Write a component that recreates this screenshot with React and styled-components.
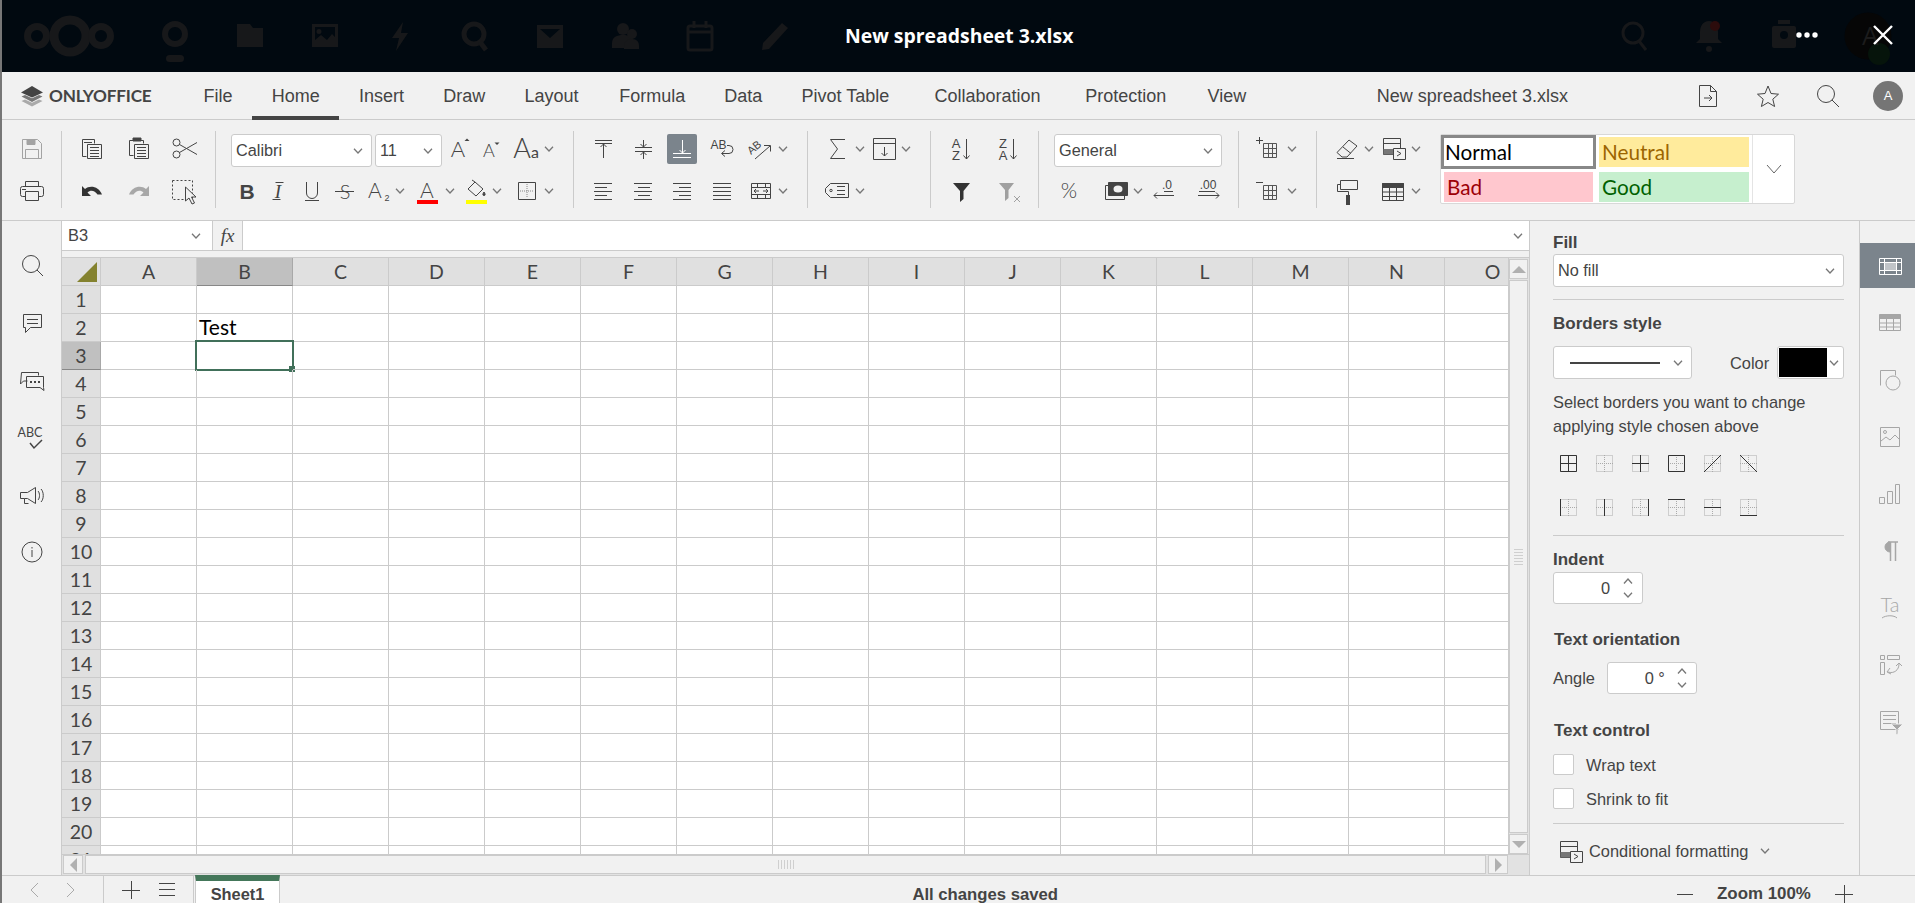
import React from "react";
import styled, { createGlobalStyle } from "styled-components";

const GlobalStyle = createGlobalStyle`
  html, body { margin: 0; padding: 0; overflow: hidden; background: #f1f1f1; }
  * { box-sizing: border-box; }
`;

const INK = "#444444";
const LINE = "#cbcbcb";
const UI_FONT = `"Liberation Sans", Arial, sans-serif`;

const Page = styled.div`
  width: 1915px;
  height: 903px;
  border-left: 2px solid #777;
  display: flex;
  flex-direction: column;
  overflow: hidden;
  background: #f1f1f1;
  color: ${INK};
  font-family: ${UI_FONT};
  font-size: 16.4px;
`;

/* ---------- dimmed nextcloud header ---------- */
const TopBar = styled.header`
  position: relative;
  flex: 0 0 72px;
  display: flex;
  align-items: center;
  justify-content: space-between;
  background: #010910;
  padding: 0 21px 0 22px;
`;
const TopGroup = styled.div`
  display: flex;
  align-items: center;
  gap: 45px;
`;
const TopTitle = styled.div`
  position: absolute;
  left: 843px;
  top: 20px;
  color: #fff;
  font: 700 19.400px/32px "Open Sans", sans-serif;
  white-space: nowrap;
`;
const OverButton = styled.div`
  position: absolute;
  top: 20px;
  left: ${(p) => p.$left}px;
  line-height: 0;
`;

const Dim = ({ w = 30, h = 30, children }) => (
  <svg width={w} height={h} viewBox={`0 0 ${w} ${h}`} fill="#17181a">{children}</svg>
);

const NextLogo = () => (
  <svg width="91" height="42" viewBox="0 0 91 42" fill="none" stroke="#17181a">
    <circle cx="46" cy="21" r="16" strokeWidth="9" />
    <circle cx="13" cy="21" r="9.5" strokeWidth="7" />
    <circle cx="77" cy="21" r="9.5" strokeWidth="7" />
  </svg>
);

const TopIcons = [
  <svg key="bulb" width="30" height="42" viewBox="0 0 30 42" fill="none" stroke="#17181a" style={{ marginTop: 12 }}>
    <circle cx="15" cy="13" r="10" strokeWidth="6" />
    <rect x="6" y="34" width="18" height="7" rx="3.5" fill="#17181a" stroke="none" />
  </svg>,
  <Dim key="folder"><path d="M2 3h13l3 4h10v19H2z" /></Dim>,
  <Dim key="image"><path fillRule="evenodd" d="M2 3h26v23H2zM5 6v13l6-5 6 5 5-6 3 3V6zM9 8a2.5 2.5 0 1 1 0 5 2.5 2.5 0 0 1 0-5z" /></Dim>,
  <Dim key="bolt"><path d="M18 1L7 17h7l-3 13 12-18h-7z" /></Dim>,
  <svg key="search" width="30" height="32" viewBox="0 0 30 32" fill="none" stroke="#17181a" strokeWidth="5"><circle cx="14" cy="14" r="10" /><path d="M20 22l6 8" /></svg>,
  <Dim key="mail"><path fillRule="evenodd" d="M2 4h26v23H2zM5 8l10 9 10-9z" /></Dim>,
  <Dim key="contacts"><circle cx="13" cy="8" r="6" /><path d="M2 22c0-6 5-8 11-8s11 2 11 8v5H2z" /><circle cx="22" cy="13" r="5" /><path d="M14 26c0-5 3-8 8-8s7 3 7 7v3H14z" /></Dim>,
  <svg key="calendar" width="30" height="32" viewBox="0 0 30 32" fill="none" stroke="#17181a" strokeWidth="3"><rect x="3" y="6" width="24" height="24" rx="2" /><path d="M2 12h26M9 1v7M21 1v7" /></svg>,
  <Dim key="pencil"><path d="M22 2l6 5L9 28l-7 1 1-7z" /></Dim>,
];

/* ---------- tab row ---------- */
const TabBar = styled.nav`
  flex: 0 0 48px;
  display: flex;
  align-items: stretch;
  border-bottom: 1px solid ${LINE};
  font-size: 18px;
  padding-left: 18px;
`;
const Logo = styled.div`
  display: flex;
  align-items: center;
  gap: 5px;
  width: 164px;
  font: 700 17.2px "Lato", sans-serif;
  color: #444;
  letter-spacing: -0.2px;
`;
const Tab = styled.div`
  position: relative;
  padding: 4px 19.6px 0;
  display: flex;
  align-items: center;
  color: ${INK};
  border-bottom: ${(p) => (p.$active ? `4px solid ${INK}` : "4px solid transparent")};
  margin: 0 ${(p) => p.$extra || 0}px -1px 0;
  white-space: nowrap;
`;
const DocName = styled.div`
  margin-left: 111px;
  padding-top: 1px;
  display: flex;
  align-items: center;
  white-space: nowrap;
`;
const TabIcons = styled.div`
  margin-left: auto;
  display: flex;
  align-items: center;
  gap: 30px;
  padding-right: 12px;
`;
const Avatar = styled.div`
  width: 30px;
  height: 30px;
  border-radius: 50%;
  background: #757575;
  color: #fff;
  font-size: 13px;
  display: flex;
  align-items: center;
  justify-content: center;
`;

/* ---------- toolbar ---------- */
const Toolbar = styled.section`
  flex: 0 0 101px;
  display: flex;
  align-items: stretch;
  padding: 11px 0 12px;
  border-bottom: 1px solid ${LINE};
`;
const Group = styled.div`
  flex: 0 0 ${(p) => p.$w}px;
  display: flex;
  flex-direction: column;
  gap: 8px;
  padding: 1px 0 0 ${(p) => p.$pad || 0}px;
  border-right: ${(p) => (p.$last ? "none" : `1px solid ${LINE}`)};
`;
const ToolRow = styled.div`
  display: flex;
  align-items: center;
  height: 34px;
  gap: ${(p) => p.$gap || 0}px;
`;
const Tool = styled.div`
  flex: 0 0 ${(p) => p.$w || 30}px;
  height: ${(p) => (p.$active ? "30px" : "34px")};
  margin-left: ${(p) => p.$ml || 0}px;
  display: flex;
  align-items: center;
  justify-content: center;
  background: ${(p) => (p.$active ? "#7b848c" : "transparent")};
  border-radius: 2px;
`;
const Combo = styled.div`
  flex: 0 0 ${(p) => p.$w}px;
  height: 33px;
  align-self: flex-start;
  margin-left: ${(p) => p.$ml || 0}px;
  margin-top: ${(p) => p.$mt || 0}px;
  background: #fff;
  border: 1px solid ${LINE};
  border-radius: 3px;
  display: flex;
  align-items: center;
  justify-content: space-between;
  padding: 0 ${(p) => p.$pr || 8}px 0 ${(p) => p.$pl || 4}px;
  color: ${INK};
  font-size: 16.3px;
`;

const Chev = ({ up, color = "#777" }) => (
  <svg width="10" height="6" viewBox="0 0 10 6" fill="none" stroke={color} strokeWidth="1.3">
    <path d={up ? "M1 5.5l4-4.5 4 4.5" : "M1 .8l4 4.2 4-4.2"} />
  </svg>
);
const ChevTool = ({ ml }) => (
  <Tool $w={14} $ml={ml}><Chev /></Tool>
);

const Ic = ({ w = 30, h = 30, color = INK, children }) => (
  <svg width={w} height={h} viewBox={`0 0 ${w} ${h}`} fill="none" stroke={color} strokeWidth="1" style={{ display: "block", flex: "none" }}>
    {children}
  </svg>
);
const T = ({ x, y, s, w = 400, f = "Liberation Sans", c = INK, i, r, children }) => (
  <text x={x} y={y} fontSize={s} fontWeight={w} fontFamily={f} fill={c} stroke="none" textAnchor="middle" fontStyle={i ? "italic" : "normal"} transform={r}>
    {children}
  </text>
);
const Lines = ({ x1, x2, ys }) => (
  <path d={ys.map((y) => `M${x1} ${y}H${x2}`).join("")} />
);

const SaveI = () => (
  <Ic color="#a3a3a3"><path d="M5.5 5.5h15l4 4v15h-19z" /><path d="M10 5.5h8v5h-8z" fill="#a3a3a3" /><path d="M8.5 24.5v-9h13v9" /></Ic>
);
const PrintI = () => (
  <Ic><path d="M8.5 10V5.5h13V10M8.5 20.5h-3a2 2 0 0 1-2-2v-6a2 2 0 0 1 2-2h19a2 2 0 0 1 2 2v6a2 2 0 0 1-2 2h-3" /><path d="M8.5 15.5h13v9h-13z" /><path d="M5 13.5h4" /></Ic>
);
const CopyI = () => (
  <Ic><path d="M9.5 22.5h-4v-17h12v4" /><path d="M10.5 10.5h14v14h-14z" fill="#f1f1f1" /><Lines x1={13} x2={22} ys={[13.5, 16.5, 19.5, 22.5]} /><Lines x1={7} x2={15} ys={[8.5]} /></Ic>
);
const PasteI = () => (
  <Ic><path d="M9.5 21.5h-4v-15h14v3" /><path d="M9 4h8v3H9z" fill={INK} /><path d="M10.5 10.5h14v14h-14z" fill="#f1f1f1" /><Lines x1={13} x2={22} ys={[13.5, 16.5, 19.5, 22.5]} /></Ic>
);
const CutI = () => (
  <Ic><circle cx="6.5" cy="8.5" r="3.5" /><circle cx="6.5" cy="20.5" r="3.5" /><path d="M9.5 10.5L27 20.5M9.5 18.5L27 8.5" /></Ic>
);
const UndoI = ({ color = "#333" }) => (
  <Ic><path fill={color} stroke="none" d="M5 10v10h9l-3.5-3.5c3-3 7.5-2 10 2h4.500C22 10.500 13 8.500 8 13z" /></Ic>
);
const RedoI = () => (
  <Ic><path fill="#a8a8a8" stroke="none" d="M25 10v10h-9l3.500-3.500c-3-3-7.500-2-10 2H5c3-8 12-10 17-5.500z" /></Ic>
);
const SelectAllI = () => (
  <Ic><path d="M2.500 4.500h20v19h-20z" strokeDasharray="2 2" /><path d="M15.500 11v14l3.500-3 3 6 2.500-1-3-6h4.500z" fill="#f1f1f1" /></Ic>
);
const GrowI = () => (
  <Ic><T x={14} y={23} s={22} f="Lato" w={300}>A</T><path d="M20.500 7l2.500-2.500L25.500 7z" fill={INK} stroke="none" /></Ic>
);
const ShrinkI = () => (
  <Ic><T x={14} y={23} s={18} f="Lato" w={300}>A</T><path d="M19.500 8.500h5L22 11z" fill={INK} stroke="none" /></Ic>
);
const CaseI = () => (
  <Ic><T x={11} y={24} s={27} f="Lato" w={300}>A</T><T x={24} y={24} s={16} f="Lato">a</T></Ic>
);
const BoldI = () => <Ic><T x={15} y={23} s={21} w={700}>B</T></Ic>;
const ItalicI = () => <Ic><T x={15} y={22} s={19} f="Liberation Serif" i>I</T><path d="M9.500 23.500h8M12.500 6.500h8" /></Ic>;
const UnderI = () => <Ic><path d="M9.500 6v11a5.500 5.500 0 0 0 11 0V6M8 24.500h14" /></Ic>;
const StrikeI = () => <Ic><T x={15} y={23} s={20} f="Lato" w={300}>S</T><path d="M5 15.500h19" /></Ic>;
const SubI = () => <Ic><T x={12} y={22} s={21} f="Lato" w={300}>A</T><T x={24} y={25} s={9}>2</T></Ic>;
const ColorI = () => (
  <Ic><T x={15} y={22} s={21} f="Lato" w={300}>A</T><path d="M5 24h21v4H5z" fill="#ff0000" stroke="none" /></Ic>
);
const FillI = () => (
  <Ic><path d="M14 6l8 7-7 7-8-7z" /><path d="M14 6l-3-2" /><path d="M23 16c-1.500 2-1.500 3.500 0 3.500s1.500-1.500 0-3.500z" fill={INK} /><path d="M5 24h21v4H5z" fill="#ffff00" stroke="none" /></Ic>
);
const BordersI = () => (
  <Ic><path d="M6.500 6.500h17v17h-17z" /><path d="M15 8v14M8 15h14" stroke="#888" strokeDasharray="1 1" /></Ic>
);

const AlignV = ({ kind, color = INK }) => (
  <Ic color={color}>
    {kind === "top" && <><Lines x1={7} x2={24} ys={[6.500, 9.500]} /><path d="M15.500 24V10M12.500 13l3-3 3 3" /></>}
    {kind === "mid" && <><Lines x1={7} x2={24} ys={[13.500, 17.500]} /><path d="M15.500 6v7M12.500 10l3 3 3-3M15.500 25v-7M12.500 21l3-3 3 3" /></>}
    {kind === "bot" && <><Lines x1={6} x2={24} ys={[19.500, 23.500]} /><path d="M15.500 6v13M12.500 16l3 3 3-3" /></>}
  </Ic>
);
const WrapI = () => (
  <Ic><T x={11.500} y={15} s={12}>AB</T><path d="M20 11.500h2a3.500 3.500 0 0 1 0 8h-7M18 16.500l-3.500 3 3.500 3" /></Ic>
);
const OrientI = () => (
  <Ic><T x={9} y={16} s={11} r="rotate(-40 10 14)">AB</T><path d="M9 25L24 12M18 11.500h6.500v6" /></Ic>
);
const AlignH = ({ kind }) => {
  const short = kind === "left" ? [7, 19] : kind === "center" ? [10, 22] : kind === "right" ? [12, 24] : [6, 24];
  return (
    <Ic>
      <Lines x1={6} x2={24} ys={[7.500, 15.500, 23.500]} />
      <Lines x1={short[0]} x2={short[1]} ys={[11.500, 19.500]} />
    </Ic>
  );
};
const MergeI = () => (
  <Ic><path d="M5.500 7.500h19v15h-19z" /><path d="M5.500 11.500h19M5.500 18.500h19M11.500 7.500v4M19.500 7.500v4M11.500 18.500v4M19.500 18.500v4M8 15h5M17 15h5M10 13l-2 2 2 2M20 13l2 2-2 2" /></Ic>
);
const SumI = () => <Ic><path d="M23 5.500H8.500L15.500 15l-7 9.500H23" /></Ic>;
const FillDownI = () => (
  <Ic><path d="M4.500 4.500h22v21h-22zM4.500 9.500h22" /><path d="M15.500 13v9M12.500 19l3 3 3-3" /></Ic>
);
const TagI = () => (
  <Ic><path d="M8.500 7.500h18v14h-18l-5-5v-4z" /><circle cx="9" cy="14.500" r="1.200" /><Lines x1={15} x2={23} ys={[10.500, 14.500, 18.500]} /></Ic>
);
const SortI = ({ a, b }) => (
  <Ic><T x={9} y={14} s={13}>{a}</T><T x={9} y={26} s={13}>{b}</T><path d="M19.500 5v20M16.500 21.500l3 3.500 3-3.500" /></Ic>
);
const FunnelI = ({ color = "#333" }) => (
  <Ic><path d="M6 7h17l-6.500 8v8L13 26V15z" fill={color} stroke="none" /></Ic>
);
const ClearFilterI = () => (
  <Ic color="#a0a0a0"><path d="M5 7h15l-5.500 7v8L11 25V14z" fill="#a0a0a0" stroke="none" /><path d="M20 20l6 6M26 20l-6 6" /></Ic>
);
const PercentI = () => <Ic><T x={15} y={22} s={21} f="Lato" w={300}>%</T></Ic>;
const MoneyI = () => (
  <Ic><path d="M8.500 6.500h19v13h-19z" fill={INK} /><ellipse cx="18" cy="13" rx="4.500" ry="3.500" fill="#f1f1f1" stroke="none" /><path d="M8.500 9.500h-3v14h19v-4" /></Ic>
);
const DecI = () => (
  <Ic><T x={20} y={13} s={12}>.0</T><path d="M27 19.500H7M10 16.500l-3 3 3 3" /><path d="M17 15.500h9" /></Ic>
);
const IncI = () => (
  <Ic><T x={15} y={13} s={12}>.00</T><path d="M5 19.500h21M23 16.500l3 3-3 3M6 15.500h16" /></Ic>
);
const CellsI = ({ sign }) => (
  <Ic>
    <path d="M10.500 9.500h13v14h-13zM10.500 14.500h13M10.500 19.500h13M15.500 9.500v14M19.500 9.500v14" stroke="#555" />
    <path d={sign === "+" ? "M3 6.500h7M6.500 3v7" : "M3 6.500h7"} />
  </Ic>
);
const EraserI = () => (
  <Ic><path d="M5 18.500L17 6l8 6-10 11H10z" /><path d="M11 13l8 6.500" /><path d="M5 24.500h17" /></Ic>
);
const CondI = ({ size = 30 }) => (
  <Ic w={size} h={size}>
    <path d="M5.500 4.500h17v16h-17z" /><path d="M5.500 9.500h17" />
    <path d="M5.500 15h10v5.500h-10z" fill="#777" stroke="none" />
    <path d="M15.500 14.500h12v11h-12z" fill="#f1f1f1" /><path d="M19 17l4 2.500-4 2.500" />
  </Ic>
);
const RollerI = () => (
  <Ic><path d="M8.500 4.500h17v9h-17zM8.500 8.500h-3v7h11v4" /><path d="M14 19h4v10h-4z" fill={INK} stroke="none" /></Ic>
);
const TableI = () => (
  <Ic><path d="M4.500 7.500h21v17h-21z" /><path d="M4.500 7.500h21v4h-21z" fill={INK} /><path d="M4.500 16h21M4.500 20.500h21M11.500 11.500v13M18.500 11.500v13" /></Ic>
);

/* ---------- style gallery ---------- */
const Gallery = styled.div`
  flex: 0 0 355px;
  height: 70px;
  margin: 3px 0 0 16px;
  display: grid;
  grid-template-columns: 155px 156px 1fr;
  grid-template-rows: 34px 34px;
  background: #fff;
  border: 1px solid #d8d8d8;
  border-radius: 2px;
`;
const StyleCell = styled.div`
  margin: ${(p) => (p.$selected ? "0" : p.$low ? "3px 3px 1px" : "2px 3px")};
  border: ${(p) => (p.$selected ? "3px solid #888" : "none")};
  background: ${(p) => p.$bg};
  color: ${(p) => p.$fg};
  font: 20.7px/1 "Lato", sans-serif;
  display: flex;
  align-items: center;
  padding-left: ${(p) => (p.$selected ? "1px" : "3px")};
`;
const GalleryMore = styled.div`
  grid-column: 3;
  grid-row: 1 / span 2;
  border-left: 1px solid #e4e4e4;
  display: flex;
  align-items: center;
  justify-content: center;
`;

/* ---------- main ---------- */
const Main = styled.div`
  flex: 0 0 654px;
  min-height: 0;
  display: flex;
  align-items: stretch;
`;
const LeftRail = styled.aside`
  flex: 0 0 60px;
  border-right: 1px solid ${LINE};
  display: flex;
  flex-direction: column;
  align-items: center;
  gap: 27.200px;
  padding-top: 30px;
`;
const Center = styled.div`
  flex: 0 0 1468px;
  min-height: 0;
  border-right: 1px solid ${LINE};
  display: flex;
  flex-direction: column;
`;
const FormulaBar = styled.div`
  flex: 0 0 30px;
  display: flex;
  border-bottom: 1px solid ${LINE};
`;
const NameBox = styled.div`
  flex: 0 0 150px;
  background: #fff;
  display: flex;
  align-items: center;
  justify-content: space-between;
  padding: 0 11px 0 6px;
`;
const FxBox = styled.div`
  flex: 0 0 31px;
  background: #f1f1f1;
  border-left: 1px solid ${LINE};
  border-right: 1px solid ${LINE};
  font: italic 19px "Liberation Serif", serif;
  display: flex;
  align-items: center;
  justify-content: center;
  color: #444;
`;
const FormulaInput = styled.div`
  flex: 1;
  background: #fff;
  display: flex;
  align-items: center;
  justify-content: flex-end;
  padding-right: 6px;
`;
const FormulaGap = styled.div`
  flex: 0 0 7px;
  border-bottom: 1px solid ${LINE};
`;
const SheetRow = styled.div`
  flex: 0 0 596px;
  min-height: 0;
  display: flex;
`;
const SheetClip = styled.div`
  flex: 0 0 1446px;
  overflow: hidden;
  background: #fff;
`;
const Cells = styled.div`
  display: grid;
  grid-template-columns: 39px repeat(15, 96px);
  grid-auto-rows: 28px;
  width: max-content;
  font: 19.500px "Lato", sans-serif;
`;
const Head = styled.div`
  background: ${(p) => (p.$sel ? "#c0c0c0" : "#e0e0e0")};
  border-right: 1px solid ${(p) => (p.$sel ? "#a8a8a8" : LINE)};
  border-bottom: 1px solid ${(p) => (p.$sel ? "#888" : LINE)};
  color: #444;
  display: flex;
  align-items: center;
  justify-content: center;
`;
const Corner = styled.div`
  background: #e0e0e0;
  border-right: 1px solid ${LINE};
  border-bottom: 1px solid ${LINE};
  display: flex;
  align-items: flex-end;
  justify-content: flex-end;
  padding: 0 3px 3px 0;
  &::after {
    content: "";
    width: 20px;
    height: 20px;
    background: #84822f;
    clip-path: polygon(100% 0, 100% 100%, 0 100%);
  }
`;
const Cell = styled.div`
  position: relative;
  border-right: 1px solid ${LINE};
  border-bottom: 1px solid ${LINE};
  color: #000;
  padding-left: 2px;
  font-size: 21px;
  line-height: 25px;
`;
const Selection = styled.div`
  position: absolute;
  left: -2px;
  top: -2px;
  width: 99px;
  height: 31px;
  border: 2px solid #41705a;
  &::after {
    content: "";
    position: absolute;
    right: -3px;
    bottom: -3px;
    width: 6px;
    height: 6px;
    background: #41705a;
  }
`;
const VScroll = styled.div`
  flex: 0 0 21px;
  display: flex;
  flex-direction: column;
  gap: 1px;
  background: #e2e2e2;
  padding-top: 1px;
  border-left: 1px solid ${LINE};
  padding-right: 1px;
`;
const ScrollBtn = styled.div`
  flex: 0 0 20px;
  background: #f1f1f1;
  border: 1px solid ${LINE};
  display: flex;
  align-items: center;
  justify-content: center;
`;
const ScrollThumb = styled.div`
  flex: 1;
  background: #f1f1f1;
  border: 1px solid ${LINE};
  display: flex;
  flex-direction: ${(p) => (p.$h ? "row" : "column")};
  align-items: center;
  justify-content: center;
  gap: 2px;
`;
const Grip = styled.span`
  background: #cfcfcf;
  width: ${(p) => (p.$h ? "1px" : "9px")};
  height: ${(p) => (p.$h ? "9px" : "1px")};
`;
const HScroll = styled.div`
  flex: 1;
  min-height: 0;
  display: flex;
  gap: 2px;
  background: #e2e2e2;
  padding: 0 21px 1px 1px;
  border-top: 1px solid ${LINE};
`;
const Tri = styled.span`
  width: 0;
  height: 0;
  border: 5px solid transparent;
  ${(p) => p.$dir === "up" && `border-bottom: 7px solid #b0b0b0; border-top: 0; border-left-width: 7px; border-right-width: 7px;`}
  ${(p) => p.$dir === "down" && `border-top: 7px solid #b0b0b0; border-bottom: 0; border-left-width: 7px; border-right-width: 7px;`}
  ${(p) => p.$dir === "left" && `border-right: 7px solid #b0b0b0; border-left: 0; border-top-width: 7px; border-bottom-width: 7px;`}
  ${(p) => p.$dir === "right" && `border-left: 7px solid #b0b0b0; border-right: 0; border-top-width: 7px; border-bottom-width: 7px;`}
`;

/* ---------- settings panel ---------- */
const Panel = styled.aside`
  flex: 0 0 330px;
  border-right: 1px solid ${LINE};
  padding: 11px 15px 0 23px;
`;
const Label = styled.div`
  font-weight: 700;
  font-size: 17px;
  height: 20px;
  line-height: 22px;
  margin-top: ${(p) => p.$mt || 0}px;
  margin-left: ${(p) => p.$ml || 0}px;
`;
const Divider = styled.div`
  height: 1px;
  background: ${LINE};
  margin-top: ${(p) => p.$mt}px;
`;
const PanelRow = styled.div`
  display: flex;
  align-items: center;
  margin-top: ${(p) => p.$mt || 0}px;
`;
const ColorLabel = styled.span`
  margin: 2px 0 0 38px;
`;
const LineSample = styled.span`
  width: 90px;
  height: 2px;
  background: #444;
  margin-left: 12px;
`;
const Swatch = styled.div`
  flex: 0 0 67px;
  height: 33px;
  margin-left: auto;
  background: #fff;
  border: 1px solid ${LINE};
  border-radius: 3px;
  padding: 1px;
  display: flex;
  align-items: center;
  gap: 2px;
  &::before {
    content: "";
    width: 48px;
    height: 29px;
    background: #000;
  }
`;
const Hint = styled.p`
  margin: 12px 0 0;
  line-height: 23.500px;
`;
const BorderGrid = styled.div`
  display: grid;
  grid-template-columns: repeat(6, 36px);
  grid-auto-rows: 17px;
  row-gap: 27px;
  margin: 17px 0 0 7px;
`;
const Stepper = styled.div`
  flex: 0 0 90px;
  height: 32px;
  background: #fff;
  border: 1px solid ${LINE};
  border-radius: 3px;
  margin-left: ${(p) => p.$ml || 0}px;
  margin-top: ${(p) => p.$mt || 0}px;
  display: flex;
  align-items: center;
  justify-content: flex-end;
  gap: ${(p) => p.$gap}px;
  padding-right: 9px;
`;
const StepArrows = styled.div`
  display: flex;
  flex-direction: column;
  gap: 8px;
`;
const CheckRow = styled.div`
  display: flex;
  align-items: center;
  gap: 12px;
  height: 21px;
  margin-top: ${(p) => p.$mt}px;
`;
const CheckBox = styled.span`
  flex: 0 0 21px;
  height: 21px;
  background: #fff;
  border: 1px solid ${LINE};
  border-radius: 2px;
`;
const CheckText = styled.span`
  margin-top: 2px;
`;
const CondRow = styled.div`
  display: flex;
  align-items: center;
  height: 30px;
  margin-top: 12px;
  gap: 6px;
  padding-left: 2px;
`;
const CondChev = styled.span`
  margin-left: 6px;
  line-height: 0;
`;

const RightRail = styled.aside`
  flex: 1;
  display: flex;
  flex-direction: column;
  gap: 12px;
  padding-top: 22px;
`;
const RailTab = styled.div`
  flex: 0 0 45px;
  display: flex;
  align-items: center;
  justify-content: center;
  padding-left: 4px;
  background: ${(p) => (p.$active ? "#7b848c" : "transparent")};
`;

/* ---------- status bar ---------- */
const Status = styled.footer`
  flex: 0 0 28px;
  display: flex;
  align-items: flex-start;
  border-top: 1px solid ${LINE};
  font-size: 16.7px;
  font-weight: 700;
`;
const StatusCell = styled.div`
  flex: 0 0 ${(p) => p.$w}px;
  height: 27px;
  display: flex;
  align-items: center;
  justify-content: center;
  gap: ${(p) => p.$gap || 0}px;
  border-right: 1px solid ${LINE};
`;
const SheetTab = styled.div`
  flex: 0 0 85px;
  height: 28px;
  margin: -1px 0 0 1px;
  background: #fff;
  border-top: 6px solid #44775a;
  border-right: 1px solid ${LINE};
  border-left: 1px solid ${LINE};
  text-align: center;
  font-size: 16.4px;
  line-height: 26px;
`;
const SavedNote = styled.div`
  flex: 0 0 778px;
  height: 27px;
  line-height: 37px;
  text-align: right;
  white-space: nowrap;
`;
const ZoomBox = styled.div`
  margin-left: 619px;
  font-size: 16.9px;
  display: flex;
  align-items: center;
  gap: 24px;
  height: 36px;
`;

const TABS = [
  { name: "File" },
  { name: "Home", active: true },
  { name: "Insert" },
  { name: "Draw" },
  { name: "Layout", extra: 1.5 },
  { name: "Formula" },
  { name: "Data" },
  { name: "Pivot Table", extra: 6 },
  { name: "Collaboration", extra: 5.5 },
  { name: "Protection", extra: 2 },
  { name: "View" },
];
const COLS = "ABCDEFGHIJKLMNO".split("");
const ROWS = Array.from({ length: 22 }, (_, i) => i + 1);

const BORDER_LINES = [
  "M.5 .5h16v16H.5zM8.500 0v17M0 8.500h17",
  "",
  "M8.500 0v17M0 8.500h17",
  "M.5 .5h16v16H.5z",
  "M0 17L17 0",
  "M0 0l17 17",
  "M.5 0v17",
  "M8.500 0v17",
  "M16.500 0v17",
  "M0 .5h17",
  "M0 8.500h17",
  "M0 16.500h17",
];
const BorderIcon = ({ d }) => (
  <Ic w={17} h={17}>
    <path d="M.5 .5h16v16H.5zM8.500 0v17M0 8.500h17" stroke="#aaa" strokeDasharray="1 1" />
    {d && <path d={d} stroke="#333" />}
  </Ic>
);

const RAIL_COLOR = "#a6a6a6";
const RailIcons = [
  <Ic key="cell" color="#fff"><path d="M4.500 7.500h22v16h-22zM4.500 11.500h22M4.500 19.500h22M9.500 7.500v16M21.500 7.500v16" /><path d="M9.500 11.500h12v8h-12z" fill="#c0c4c8" /></Ic>,
  <Ic key="table" color={RAIL_COLOR}><path d="M4.500 8.500h21v14h-21z" /><path d="M4.500 6.500h21v4h-21z" fill={RAIL_COLOR} /><path d="M4.500 15h21M4.500 19h21M11.500 10v12M18.500 10v12" /></Ic>,
  <Ic key="shape" color={RAIL_COLOR}><path d="M5.500 20.500v-15h15v5" /><circle cx="18" cy="18" r="7" /></Ic>,
  <Ic key="image" color={RAIL_COLOR}><path d="M5.500 5.500h19v19h-19z" /><circle cx="10" cy="10" r="1.500" /><path d="M6 19l5-4 4 3 5-5 4 4" /></Ic>,
  <Ic key="chart" color={RAIL_COLOR}><path d="M4.500 18.500h5v6h-5zM12.500 12.500h5v12h-5zM20.500 5.500h4v19h-4z" /></Ic>,
  <Ic key="para" color={RAIL_COLOR}><path d="M13 6h10M15.500 6v19M20.500 6v19" strokeWidth="1.500" /><path d="M15 6a5 5 0 0 0 0 10z" fill={RAIL_COLOR} /></Ic>,
  <Ic key="art" color={RAIL_COLOR}><T x={15} y={19} s={20} f="Lato" w={300} c={RAIL_COLOR}>Ta</T><path d="M7 25c4-3 12-3 15 0" /></Ic>,
  <Ic key="pivot" color={RAIL_COLOR}><path d="M5.500 5.500h4v4h-4zM12.500 5.500h12v4h-12zM5.500 12.500h4v12h-4z" /><path d="M13 22c6 2 11-2 11-8M21 16l3-3 3 3M15 18l-3 4 4 2" /></Ic>,
  <Ic key="slicer" color={RAIL_COLOR}><path d="M5.500 4.500h18v18h-18z" /><Lines x1={8} x2={21} ys={[8.500, 12.500, 16.500]} /><path d="M16 17h12l-5 5v5l-2 1v-6z" fill={RAIL_COLOR} stroke="#f1f1f1" /></Ic>,
];

export default function App() {
  return (
    <>
      <GlobalStyle />
      <Page>
        <TopBar>
          <TopGroup>
            <NextLogo />
            {TopIcons}
          </TopGroup>
          <TopGroup>
            <svg width="30" height="32" viewBox="0 0 30 32" fill="none" stroke="#17181a" strokeWidth="3"><circle cx="14" cy="13" r="10" /><path d="M20 21l7 9" /></svg>
            <svg width="30" height="36" viewBox="0 0 30 36" fill="#17181a"><path d="M15 3c6 0 9 5 9 11v7l4 4H2l4-4v-7c0-6 3-11 9-11z" /><circle cx="15" cy="31" r="3" /><circle cx="21" cy="8" r="5" fill="#2c0c0c" /></svg>
            <svg width="30" height="36" viewBox="0 0 30 36" fill="#17181a"><rect x="3" y="8" width="24" height="22" rx="2" /><rect x="9" y="2" width="12" height="4" /><circle cx="15" cy="17" r="4" fill="#010910" /></svg>
            <svg width="50" height="60" viewBox="0 0 50 60" style={{ marginTop: 12 }}>
              <circle cx="24" cy="24" r="23.500" fill="#060606" />
              <circle cx="35" cy="42" r="11" fill="#06140b" />
              <text x="18" y="33" fontSize="26" fontFamily="Open Sans" fill="#1c1c1c">A</text>
            </svg>
          </TopGroup>
          <TopTitle>New spreadsheet 3.xlsx</TopTitle>
          <OverButton $left={1792}>
            <svg width="26" height="30" viewBox="0 0 26 30" fill="#fff"><circle cx="5" cy="15" r="2.700" /><circle cx="13" cy="15" r="2.700" /><circle cx="21" cy="15" r="2.700" /></svg>
          </OverButton>
          <OverButton $left={1866}>
            <svg width="30" height="30" viewBox="0 0 30 30" stroke="#fff" strokeWidth="2.400"><path d="M6 6l18 18M24 6L6 24" /></svg>
          </OverButton>
        </TopBar>

        <TabBar>
          <Logo>
            <svg width="24" height="24" viewBox="0 0 24 24">
              <path d="M12 13.500L1 8.500 12 2l11 6.500z" fill="#444" />
              <path d="M1.500 12.500L5 11l7 3.200 7-3.200 3.500 1.500L12 18z" fill="#777" />
              <path d="M1.500 17l3.500-1.500 7 3.200 7-3.200 3.500 1.500L12 22.500z" fill="#aaa" />
            </svg>
            ONLYOFFICE
          </Logo>
          {TABS.map((t) => (
            <Tab key={t.name} $active={t.active} $extra={t.extra}>{t.name}</Tab>
          ))}
          <DocName>New spreadsheet 3.xlsx</DocName>
          <TabIcons>
            <Ic><path d="M6.500 4.500h11l6 6v15h-17zM17.500 4.500v6h6M11 17h8M16 14l3 3-3 3" /></Ic>
            <Ic><path d="M15 5l3 7.500 7.500.7-5.700 5 1.800 7.300-6.600-4-6.600 4 1.800-7.300-5.700-5 7.500-.7z" /></Ic>
            <Ic><circle cx="13" cy="13" r="8.500" /><path d="M19 19l7 7" /></Ic>
            <Avatar>A</Avatar>
          </TabIcons>
        </TabBar>

        <Toolbar>
          <Group $w={60}>
            <ToolRow $gap={0}><Tool $ml={15}><SaveI /></Tool></ToolRow>
            <ToolRow><Tool $ml={15}><PrintI /></Tool></ToolRow>
          </Group>
          <Group $w={154} $pad={15}>
            <ToolRow $gap={16.500}><Tool><CopyI /></Tool><Tool><PasteI /></Tool><Tool><CutI /></Tool></ToolRow>
            <ToolRow $gap={16.500}><Tool><UndoI /></Tool><Tool><RedoI /></Tool><Tool><SelectAllI /></Tool></ToolRow>
          </Group>
          <Group $w={358} $pad={15}>
            <ToolRow>
              <Combo $w={141} $mt={2}>Calibri<Chev /></Combo>
              <Combo $w={67} $ml={3} $mt={2}>11<Chev /></Combo>
              <Tool $ml={2}><GrowI /></Tool>
              <Tool $ml={1}><ShrinkI /></Tool>
              <Tool $ml={6}><CaseI /></Tool>
              <ChevTool ml={1} />
            </ToolRow>
            <ToolRow>
              <Tool $ml={1}><BoldI /></Tool>
              <Tool $ml={1}><ItalicI /></Tool>
              <Tool $ml={4}><UnderI /></Tool>
              <Tool $ml={3}><StrikeI /></Tool>
              <Tool $ml={3}><SubI /></Tool>
              <ChevTool />
              <Tool $ml={5}><ColorI /></Tool>
              <ChevTool ml={1} />
              <Tool $ml={4}><FillI /></Tool>
              <ChevTool ml={-1} />
              <Tool $ml={8}><BordersI /></Tool>
              <ChevTool />
            </ToolRow>
          </Group>
          <Group $w={234} $pad={14}>
            <ToolRow $gap={9.500}>
              <Tool><AlignV kind="top" /></Tool>
              <Tool><AlignV kind="mid" /></Tool>
              <Tool $active><AlignV kind="bot" color="#fff" /></Tool>
              <Tool><WrapI /></Tool>
              <Tool><OrientI /></Tool>
              <ChevTool ml={-9.500} />
            </ToolRow>
            <ToolRow $gap={9.500}>
              <Tool><AlignH kind="left" /></Tool>
              <Tool><AlignH kind="center" /></Tool>
              <Tool><AlignH kind="right" /></Tool>
              <Tool><AlignH kind="just" /></Tool>
              <Tool><MergeI /></Tool>
              <ChevTool ml={-9.500} />
            </ToolRow>
          </Group>
          <Group $w={123} $pad={14}>
            <ToolRow>
              <Tool><SumI /></Tool><ChevTool ml={1} />
              <Tool $ml={2}><FillDownI /></Tool><ChevTool />
            </ToolRow>
            <ToolRow><Tool><TagI /></Tool><ChevTool ml={1} /></ToolRow>
          </Group>
          <Group $w={108} $pad={16}>
            <ToolRow $gap={17}><Tool><SortI a="A" b="Z" /></Tool><Tool><SortI a="Z" b="A" /></Tool></ToolRow>
            <ToolRow $gap={17}><Tool><FunnelI /></Tool><Tool><ClearFilterI /></Tool></ToolRow>
          </Group>
          <Group $w={200} $pad={15}>
            <ToolRow><Combo $w={168} $mt={2}>General<Chev /></Combo></ToolRow>
            <ToolRow>
              <Tool><PercentI /></Tool>
              <Tool $ml={16}><MoneyI /></Tool><ChevTool ml={1} />
              <Tool $ml={2}><DecI /></Tool>
              <Tool $ml={16}><IncI /></Tool>
            </ToolRow>
          </Group>
          <Group $w={78} $pad={14}>
            <ToolRow><Tool><CellsI sign="+" /></Tool><ChevTool ml={2} /></ToolRow>
            <ToolRow><Tool><CellsI sign="-" /></Tool><ChevTool ml={2} /></ToolRow>
          </Group>
          <Group $w={107} $pad={15} $last>
            <ToolRow><Tool><EraserI /></Tool><ChevTool /><Tool $ml={2}><CondI /></Tool><ChevTool ml={1} /></ToolRow>
            <ToolRow><Tool><RollerI /></Tool><Tool $w={14} /><Tool $ml={2}><TableI /></Tool><ChevTool ml={1} /></ToolRow>
          </Group>
          <Gallery>
            <StyleCell $selected $bg="#fff" $fg="#000">Normal</StyleCell>
            <StyleCell $bg="#ffeb9c" $fg="#9c6500">Neutral</StyleCell>
            <GalleryMore>
              <svg width="16" height="10" viewBox="0 0 16 10" fill="none" stroke="#666"><path d="M1 1l7 8 7-8" /></svg>
            </GalleryMore>
            <StyleCell $low $bg="#ffc7ce" $fg="#9c0006">Bad</StyleCell>
            <StyleCell $low $bg="#c6efce" $fg="#006100">Good</StyleCell>
          </Gallery>
        </Toolbar>

        <Main>
          <LeftRail>
            <Ic><circle cx="14" cy="13" r="8.500" /><path d="M20 19l6 6" /></Ic>
            <Ic><path d="M6.500 6.500h18v13h-11l-5 5v-5h-2z" /><Lines x1={10} x2={21} ys={[11.500, 15.500]} /></Ic>
            <Ic><path d="M3.500 19l1-11.500h17v3" /><path d="M3.500 19l3-3h4" /><path d="M9.500 11.500h17v11l.5 3-4-3h-13.500z" /><path d="M13 17h2M17 17h2M21 17h2" strokeWidth="2" /></Ic>
            <Ic><T x={13} y={14} s={12.500} f="Lato">ABC</T><path d="M13 20l4 5 8-8" strokeWidth="1.500" /></Ic>
            <Ic><path d="M3.500 12.500h7l8-5v16l-8-5h-3v5h4M3.500 12.500v6h4" /><path d="M21 11c2 2 2 7 0 9M24 9c3 3 3 10 0 13" /></Ic>
            <Ic><circle cx="15" cy="15" r="10" /><path d="M15 13v7M15 10v1.500" /></Ic>
          </LeftRail>

          <Center>
            <FormulaBar>
              <NameBox>B3<Chev /></NameBox>
              <FxBox>fx</FxBox>
              <FormulaInput><Chev /></FormulaInput>
            </FormulaBar>
            <FormulaGap />
            <SheetRow>
              <SheetClip>
                <Cells>
                  <Corner />
                  {COLS.map((c) => <Head key={c} $sel={c === "B"}>{c}</Head>)}
                  {ROWS.map((r) => (
                    <React.Fragment key={r}>
                      <Head $sel={r === 3}>{r}</Head>
                      {COLS.map((c) => (
                        <Cell key={c}>
                          {c === "B" && r === 2 && "Test"}
                          {c === "B" && r === 3 && <Selection />}
                        </Cell>
                      ))}
                    </React.Fragment>
                  ))}
                </Cells>
              </SheetClip>
              <VScroll>
                <ScrollBtn><Tri $dir="up" /></ScrollBtn>
                <ScrollThumb>
                  {[0, 1, 2, 3, 4, 5].map((i) => <Grip key={i} />)}
                </ScrollThumb>
                <ScrollBtn><Tri $dir="down" /></ScrollBtn>
              </VScroll>
            </SheetRow>
            <HScroll>
              <ScrollBtn><Tri $dir="left" /></ScrollBtn>
              <ScrollThumb $h>
                {[0, 1, 2, 3, 4, 5].map((i) => <Grip key={i} $h />)}
              </ScrollThumb>
              <ScrollBtn><Tri $dir="right" /></ScrollBtn>
            </HScroll>
          </Center>

          <Panel>
            <Label>Fill</Label>
            <Combo $mt={2}>No fill<Chev /></Combo>
            <Divider $mt={12} />
            <Label $mt={13}>Borders style</Label>
            <PanelRow $mt={13}>
              <Combo $w={139}><LineSample /><Chev /></Combo>
              <ColorLabel>Color</ColorLabel>
              <Swatch><Chev /></Swatch>
            </PanelRow>
            <Hint>Select borders you want to change<br />applying style chosen above</Hint>
            <BorderGrid>
              {BORDER_LINES.map((d, i) => <BorderIcon key={i} d={d} />)}
            </BorderGrid>
            <Divider $mt={19} />
            <Label $mt={13}>Indent</Label>
            <PanelRow>
              <Stepper $mt={3} $gap={13}>0<StepArrows><Chev up /><Chev /></StepArrows></Stepper>
            </PanelRow>
            <Label $mt={25} $ml={1}>Text orientation</Label>
            <PanelRow $mt={13}>
              Angle
              <Stepper $ml={12} $gap={12}>0 °<StepArrows><Chev up /><Chev /></StepArrows></Stepper>
            </PanelRow>
            <Label $mt={26} $ml={1}>Text control</Label>
            <CheckRow $mt={14}><CheckBox /><CheckText>Wrap text</CheckText></CheckRow>
            <CheckRow $mt={13}><CheckBox /><CheckText>Shrink to fit</CheckText></CheckRow>
            <Divider $mt={14} />
            <CondRow>
              <CondI size={28} />
              Conditional formatting
              <CondChev><Chev /></CondChev>
            </CondRow>
          </Panel>

          <RightRail>
            {RailIcons.map((icon, i) => (
              <RailTab key={i} $active={i === 0}>{icon}</RailTab>
            ))}
          </RightRail>
        </Main>

        <Status>
          <StatusCell $w={102} $gap={18}>
            <svg width="16" height="20" viewBox="0 0 16 20" fill="none" stroke="#aaa"><path d="M10 3l-7 7 7 7" /></svg>
            <svg width="16" height="20" viewBox="0 0 16 20" fill="none" stroke="#aaa"><path d="M5 3l7 7-7 7" /></svg>
          </StatusCell>
          <StatusCell $w={90} $gap={19}>
            <Ic w={18} h={18}><path d="M0 9.500h18M9.500 0v18" /></Ic>
            <Ic w={16} h={16}><Lines x1={0} x2={16} ys={[1.500, 7.500, 13.500]} /></Ic>
          </StatusCell>
          <SheetTab>Sheet1</SheetTab>
          <SavedNote>All changes saved</SavedNote>
          <ZoomBox>
            <Ic w={16} h={16}><path d="M0 8.500h16" /></Ic>
            Zoom 100%
            <Ic w={18} h={18}><path d="M0 9.500h18M9.500 0v18" /></Ic>
          </ZoomBox>
        </Status>
      </Page>
    </>
  );
}
